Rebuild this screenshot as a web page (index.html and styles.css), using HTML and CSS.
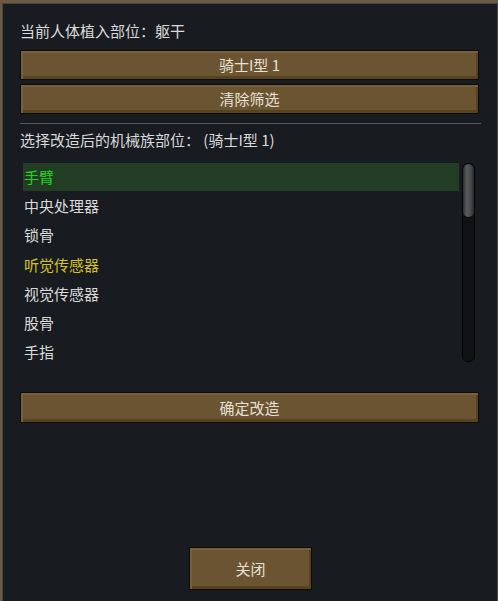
FILE: index.html
```html
<!DOCTYPE html>
<html lang="zh">
<head>
<meta charset="utf-8">
<title>机械族改造</title>
<link rel="stylesheet" href="styles.css">
</head>
<body>
<div class="panel">
  <div class="title">当前人体植入部位：躯干</div>
  <div class="btn-group">
    <button class="btn">骑士I型 1</button>
    <button class="btn">清除筛选</button>
  </div>
  <div class="sep"></div>
  <div class="label">选择改造后的机械族部位： (骑士I型 1)</div>
  <div class="list-wrap">
    <ul class="list">
      <li class="row selected">手臂</li>
      <li class="row">中央处理器</li>
      <li class="row">锁骨</li>
      <li class="row warn">听觉传感器</li>
      <li class="row">视觉传感器</li>
      <li class="row">股骨</li>
      <li class="row">手指</li>
    </ul>
    <div class="scrollbar"><div class="thumb"></div></div>
  </div>
  <button class="btn confirm">确定改造</button>
  <div class="footer">
    <button class="btn close">关闭</button>
  </div>
</div>
</body>
</html>
```

FILE: styles.css
```css
html, body {
  margin: 0;
  padding: 0;
  height: 100%;
}
body {
  background: #6a5a42;
  font-family: "Noto Sans CJK SC", "Noto Sans", sans-serif;
  font-size: 15px;
  color: #dadada;
  overflow: hidden;
}
.panel {
  box-sizing: border-box;
  margin: 3px 0 0 2px;
  height: 598px;
  background: #181b20;
  border: 1px solid #44474c;
  border-bottom: none;
  padding: 16px 18px 0 17px;
  display: flex;
  flex-direction: column;
}
.title {
  line-height: 22px;
  height: 22px;
}
.btn-group {
  margin-top: 8px;
  display: flex;
  flex-direction: column;
  gap: 4px;
}
.btn {
  box-sizing: border-box;
  display: block;
  width: 100%;
  height: 30px;
  margin: 0;
  padding: 0;
  font: inherit;
  font-size: 15px;
  color: #e6e1d6;
  background: #6b5431;
  border: 1px solid #0c0b08;
  box-shadow: inset 2px 2px 0 #77603a, inset -2px -3px 0 #57441f;
  text-align: center;
  line-height: 26px;
  cursor: pointer;
}
.sep {
  margin-top: 9px;
  height: 1px;
  background: #55585d;
  margin-right: -2px;
}
.label {
  margin-top: 5px;
  line-height: 22px;
  height: 22px;
}
.list-wrap {
  margin-top: 12px;
  display: flex;
  gap: 3px;
  height: 200px;
}
.list {
  list-style: none;
  margin: 0 0 0 3px;
  padding: 0;
  flex: 1;
}
.row {
  height: 29.2px;
  line-height: 28px;
  padding-left: 1px;
}
.row.selected {
  background: #233d24;
  color: #22d422;
  height: 28px;
  margin-bottom: 1.2px;
}
.row.warn {
  color: #d6c41c;
}
.scrollbar {
  box-sizing: border-box;
  width: 13px;
  height: 199px;
  background: #111214;
  border: 1px solid #050505;
  border-radius: 6px;
  margin-right: 4px;
  overflow: hidden;
}
.thumb {
  height: 53px;
  border-radius: 6px;
  background: linear-gradient(to right, #2e2f31 0%, #5a5b5d 35%, #4b4c4e 65%, #2a2b2d 100%);
  border-bottom: 1px solid #0a0a0a;
}
.btn.confirm {
  margin-top: 29px;
  height: 31px;
}
.footer {
  margin-top: auto;
  margin-bottom: 11px;
  display: flex;
  justify-content: center;
  padding-left: 2px;
}
.btn.close {
  width: 123px;
  height: 43px;
  line-height: 39px;
}
```
